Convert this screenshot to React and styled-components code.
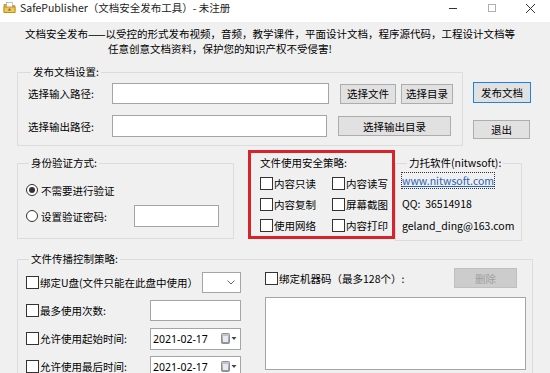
import React from "react";
import styled, { createGlobalStyle } from "styled-components";

const GlobalStyle = createGlobalStyle`
  html, body { margin: 0; padding: 0; }
  body {
    background: #f0f0f0;
    font-family: "Noto Sans CJK SC", "Noto Sans", sans-serif;
    font-size: 10.5px;
    color: #000;
  }
  * { box-sizing: border-box; }
`;

function App() {
  return (
    <Window>
      <GlobalStyle />
      <TitleBar>
        <AppIcon />
        <TitleText>SafePublisher（文档安全发布工具）- 未注册</TitleText>
        <Controls>
          <Ctrl>
            <svg width="10" height="10" viewBox="0 0 10 10">
              <path d="M1 5.5h8" stroke="#333" strokeWidth="1" />
            </svg>
          </Ctrl>
          <Ctrl>
            <svg width="10" height="10" viewBox="0 0 10 10">
              <rect x="1.5" y="1.5" width="7" height="7" fill="none" stroke="#b0b0b0" />
            </svg>
          </Ctrl>
          <Ctrl>
            <svg width="11" height="11" viewBox="0 0 11 11">
              <path d="M1 1l9 9M10 1l-9 9" stroke="#333" strokeWidth="1" />
            </svg>
          </Ctrl>
        </Controls>
      </TitleBar>

      <Description>
        <div>文档安全发布——以受控的形式发布视频，音频，教学课件，平面设计文档，程序源代码，工程设计文档等</div>
        <Indent>任意创意文档资料，保护您的知识产权不受侵害!</Indent>
      </Description>

      <Body>
        <PublishSection>
          <Group $w={446} $h={80} $pad="5px 0 0 10px">
            <legend>发布文档设置:</legend>
            <FieldRow>
              <FieldLabel>选择输入路径:</FieldLabel>
              <TextBox $w={217} $h={21} />
              <ButtonSet>
                <Button $w={56} $h={20}>选择文件</Button>
                <Button $w={52} $h={20}>选择目录</Button>
              </ButtonSet>
            </FieldRow>
            <FieldRow $top={11}>
              <FieldLabel>选择输出路径:</FieldLabel>
              <TextBox $w={215} $h={22} />
              <ButtonSet>
                <Button $w={113} $h={20}>选择输出目录</Button>
              </ButtonSet>
            </FieldRow>
          </Group>
          <SideButtons>
            <Button $w={58} $h={21} $primary>发布文档</Button>
            <Button $w={57} $h={19}>退出</Button>
          </SideButtons>
        </PublishSection>

        <MiddleSection>
          <Group $w={217} $h={82} $top={7} $pad="11px 0 0 8px">
            <legend>身份验证方式:</legend>
            <RadioRow $h={20}>
              <Radio $checked />
              <span>不需要进行验证</span>
            </RadioRow>
            <RadioRow $h={22} $top={5}>
              <Radio />
              <RadioText>设置验证密码:</RadioText>
              <TextBox $w={85} $h={22} />
            </RadioRow>
          </Group>

          <PolicyBox>
            <PolicyTitle>文件使用安全策略:</PolicyTitle>
            <PolicyGrid>
              {["内容只读", "内容读写", "内容复制", "屏幕截图", "使用网络", "内容打印"].map((t) => (
                <CheckItem key={t}>
                  <CheckBox />
                  <span>{t}</span>
                </CheckItem>
              ))}
            </PolicyGrid>
          </PolicyBox>

          <Group $w={127} $h={84} $top={7} $pad="6px 0 0 6px" $legendLeft={5}>
            <legend>力托软件(nitwsoft):</legend>
            <ContactLine>
              <SiteLink>www.nitwsoft.com</SiteLink>
            </ContactLine>
            <ContactLine $top={11}>QQ:&nbsp; 36514918</ContactLine>
            <ContactLine $top={10}>geland_ding@163.com</ContactLine>
          </Group>
        </MiddleSection>

        <Group $w={516} $h={140} $top={12} $pad="0 0 0 8px">
          <legend>文件传播控制策略:</legend>
          <SpreadColumns>
            <LimitList>
              <LimitRow>
                <CheckItem>
                  <CheckBox />
                  <span>绑定U盘(文件只能在此盘中使用）</span>
                </CheckItem>
                <Combo>
                  <svg width="8" height="5" viewBox="0 0 8 5">
                    <path d="M0.5 0.5l3.5 3.5 3.5-3.5" fill="none" stroke="#666" />
                  </svg>
                </Combo>
              </LimitRow>
              <LimitRow>
                <CheckItem>
                  <CheckBox />
                  <span>最多使用次数:</span>
                </CheckItem>
                <TextBox $w={91} $h={21} />
              </LimitRow>
              <LimitRow>
                <CheckItem>
                  <CheckBox />
                  <span>允许使用起始时间:</span>
                </CheckItem>
                <DatePicker value="2021-02-17" />
              </LimitRow>
              <LimitRow>
                <CheckItem>
                  <CheckBox />
                  <span>允许使用最后时间:</span>
                </CheckItem>
                <DatePicker value="2021-02-17" />
              </LimitRow>
            </LimitList>
            <MachinePanel>
              <MachineHead>
                <CheckItem>
                  <CheckBox />
                  <span>绑定机器码（最多128个）:</span>
                </CheckItem>
                <Button $w={63} $h={20} disabled>删除</Button>
              </MachineHead>
              <MachineList />
            </MachinePanel>
          </SpreadColumns>
        </Group>
      </Body>
    </Window>
  );
}

function DatePicker({ value }) {
  return (
    <DateBox>
      <span>{value}</span>
      <svg width="16" height="11" viewBox="0 0 16 11">
        <defs>
          <linearGradient id="cal" x1="0" y1="0" x2="0" y2="1">
            <stop offset="0" stopColor="#c8ccd4" />
            <stop offset="1" stopColor="#8d939c" />
          </linearGradient>
        </defs>
        <rect x="0.5" y="0.5" width="8" height="10" rx="1" fill="url(#cal)" stroke="#8a8f98" />
        <rect x="2" y="3" width="5" height="6" fill="#e8eaee" />
        <path d="M10.5 4h5l-2.5 3z" fill="#444" />
      </svg>
    </DateBox>
  );
}

function AppIcon() {
  return (
    <svg width="13" height="13" viewBox="0 0 13 13">
      <path d="M1 3.5h4l1 1.2h6v6.8H1z" fill="#e6b43c" stroke="#b8861c" strokeWidth="0.8" />
      <rect x="3.5" y="1.5" width="6" height="6" fill="#fff" stroke="#999" strokeWidth="0.6" />
      <path d="M1 6h11v5.5H1z" fill="#f2c94c" stroke="#b8861c" strokeWidth="0.8" />
      <circle cx="6.5" cy="8.7" r="1.2" fill="#7a7a7a" />
    </svg>
  );
}

export default App;

const Window = styled.div`
  width: 550px;
  height: 373px;
  overflow: hidden;
  display: flex;
  flex-direction: column;
`;

const TitleBar = styled.div`
  height: 22px;
  flex-shrink: 0;
  background: #fff;
  display: flex;
  align-items: flex-start;
  padding: 1px 0 0 3px;

  svg {
    flex-shrink: 0;
  }
`;

const TitleText = styled.div`
  margin-left: 4px;
  line-height: 13px;
  font-size: 10.5px;
  color: #222;
`;

const Controls = styled.div`
  margin-left: auto;
  display: flex;
`;

const Ctrl = styled.div`
  width: 39px;
  height: 14px;
  display: flex;
  align-items: center;
  justify-content: center;
`;

const Description = styled.div`
  padding: 4px 0 0 25px;
  line-height: 15px;
  white-space: nowrap;
`;

const Indent = styled.div`
  padding-left: 83px;
`;

const Body = styled.div`
  padding-left: 17px;
  display: flex;
  flex-direction: column;
`;

const PublishSection = styled.div`
  display: flex;
  align-items: flex-start;
  margin-top: 10px;
`;

const Group = styled.fieldset`
  margin: ${(p) => p.$top || 0}px 0 0 0;
  padding: ${(p) => p.$pad};
  border: 1px solid #dcdcdc;
  width: ${(p) => p.$w}px;
  height: ${(p) => p.$h}px;
  min-width: 0;
  flex-shrink: 0;

  legend {
    padding: 0 2px;
    margin-left: ${(p) => p.$legendLeft ?? 3}px;
    line-height: 12px;
  }
`;

const FieldRow = styled.div`
  display: flex;
  align-items: center;
  margin-top: ${(p) => p.$top || 0}px;
`;

const FieldLabel = styled.div`
  width: 84px;
`;

const TextBox = styled.div`
  width: ${(p) => p.$w}px;
  height: ${(p) => p.$h}px;
  background: #fff;
  border: 1px solid #a5a5a5;
  flex-shrink: 0;
`;

const ButtonSet = styled.div`
  display: flex;
  gap: 5px;
  margin-left: 11px;
`;

const Button = styled.button`
  width: ${(p) => p.$w}px;
  height: ${(p) => p.$h}px;
  padding: 0;
  font: inherit;
  color: #000;
  background: #e1e1e1;
  border: 1px solid #adadad;
  box-shadow: ${(p) => (p.$primary ? "inset 0 0 0 1px #cfe4f8" : "none")};
  border-color: ${(p) => (p.$primary ? "#2d7fd1" : "#adadad")};

  &:disabled {
    background: #cccccc;
    border-color: #bfbfbf;
    color: #a0a0a0;
  }
`;

const SideButtons = styled.div`
  display: flex;
  flex-direction: column;
  align-items: flex-start;
  gap: 17px;
  margin: 16px 0 0 10px;
`;

const MiddleSection = styled.div`
  display: flex;
  align-items: flex-start;
  margin-top: 4px;
`;

const RadioRow = styled.div`
  display: flex;
  align-items: center;
  height: ${(p) => p.$h}px;
  margin-top: ${(p) => p.$top || 0}px;
`;

const Radio = styled.span`
  width: 12px;
  height: 12px;
  border-radius: 50%;
  border: 1px solid #333;
  background: #fff;
  margin-right: 3px;
  flex-shrink: 0;
  display: flex;
  align-items: center;
  justify-content: center;

  &::after {
    content: "";
    width: 6px;
    height: 6px;
    border-radius: 50%;
    background: ${(p) => (p.$checked ? "#333" : "transparent")};
  }
`;

const RadioText = styled.span`
  width: 93px;
`;

const PolicyBox = styled.div`
  margin-left: 14px;
  width: 147px;
  height: 89px;
  border: 3px solid #d8232d;
  padding: 4px 0 0 9px;
`;

const PolicyTitle = styled.div`
  line-height: 12px;
`;

const PolicyGrid = styled.div`
  display: grid;
  grid-template-columns: 72px 62px;
  grid-auto-rows: 21px;
  margin-top: 4px;
`;

const CheckItem = styled.label`
  display: flex;
  align-items: center;
  white-space: nowrap;
`;

const CheckBox = styled.span`
  width: 13px;
  height: 13px;
  border: 1px solid #333;
  background: #fff;
  margin-right: 1px;
  flex-shrink: 0;
`;

const ContactLine = styled.div`
  line-height: 12px;
  margin-top: ${(p) => p.$top || 0}px;
  white-space: nowrap;
`;

const SiteLink = styled.span`
  color: #2a62b8;
  text-decoration: underline;
  outline: 1px dotted #333;
  outline-offset: 0;
`;

const SpreadColumns = styled.div`
  display: flex;
  align-items: flex-start;
`;

const LimitList = styled.div`
  width: 215px;
  display: flex;
  flex-direction: column;
  gap: 7px;
  margin-top: 7px;
`;

const LimitRow = styled.div`
  height: 21px;
  display: flex;
  align-items: center;
  justify-content: space-between;
`;

const Combo = styled.div`
  width: 39px;
  height: 21px;
  background: #fff;
  border: 1px solid #a5a5a5;
  display: flex;
  align-items: center;
  justify-content: flex-end;
  padding-right: 5px;
`;

const DateBox = styled.div`
  width: 91px;
  height: 22px;
  background: #fff;
  border: 1px solid #a5a5a5;
  display: flex;
  align-items: center;
  justify-content: space-between;
  padding: 0 3px 0 2px;
  font-family: "Noto Sans", sans-serif;
  font-size: 10.5px;
`;

const MachinePanel = styled.div`
  width: 261px;
  margin: 3px 0 0 24px;
`;

const MachineHead = styled.div`
  display: flex;
  align-items: center;
  justify-content: space-between;
  padding-right: 9px;
`;

const MachineList = styled.div`
  margin-top: 9px;
  height: 73px;
  background: #fff;
  border: 1px solid #a5a5a5;
`;
